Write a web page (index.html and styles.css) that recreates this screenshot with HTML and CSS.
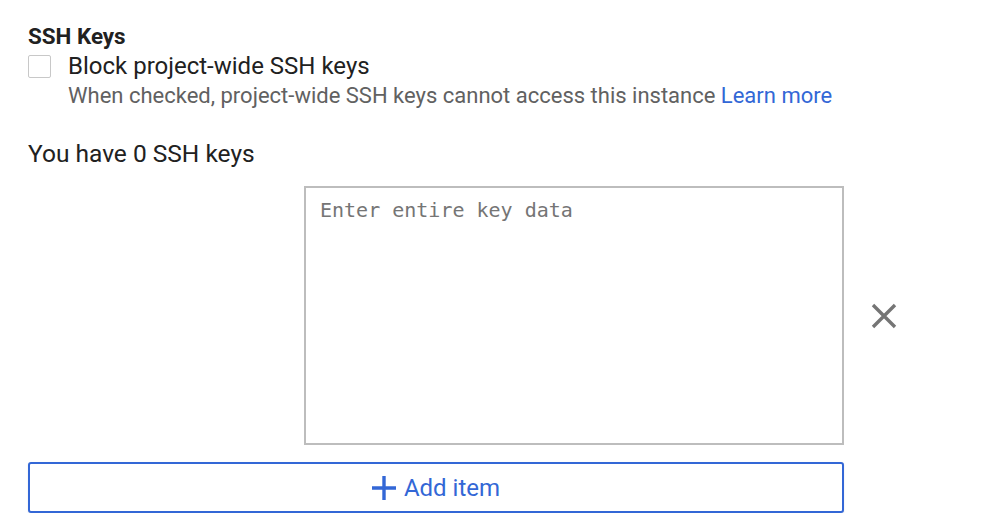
FILE: index.html
```html
<!DOCTYPE html>
<html>
<head>
<meta charset="utf-8">
<link rel="stylesheet" href="styles.css">
</head>
<body>
<div class="page">
  <div class="title">SSH Keys</div>
  <label class="check-row">
    <span class="checkbox"></span>
    <span class="check-text">
      <span class="check-label">Block project-wide SSH keys</span>
      <span class="hint">When checked, project-wide SSH keys cannot access this instance <a class="link" href="#">Learn more</a></span>
    </span>
  </label>
  <div class="count">You have 0 SSH keys</div>
  <div class="key-row">
    <textarea class="key-input" placeholder="Enter entire key data"></textarea>
    <button class="remove" aria-label="Remove">
      <svg width="28" height="28" viewBox="0 0 28 28"><path d="M3 3 L25 25 M25 3 L3 25" stroke="#757575" stroke-width="3.4" fill="none"/></svg>
    </button>
  </div>
  <button class="add">
    <svg class="plus" width="24" height="24" viewBox="0 0 24 24"><path d="M12 0 V24 M0 12 H24" stroke="#3367d6" stroke-width="3.4" fill="none"/></svg>
    <span>Add item</span>
  </button>
</div>
</body>
</html>
```
FILE: styles.css
```css
html, body { margin: 0; padding: 0; background: #fff; }
body { font-family: Roboto, "Noto Sans", sans-serif; color: #212121; }
.page { padding: 23px 0 0 28px; width: 816px; }
.title { font-size: 22.4px; font-weight: 700; line-height: 26px; }
.check-row { display: flex; gap: 17px; margin-top: 2px; }
.checkbox { width: 21px; height: 21px; border: 1px solid #c8c8c8; border-radius: 2px; margin-top: 4px; flex: none; }
.check-text { display: flex; flex-direction: column; }
.check-label { font-size: 24px; line-height: 30px; }
.hint { font-size: 22px; line-height: 30px; color: #616161; }
.link { color: #3367d6; text-decoration: none; }
.count { font-size: 24.5px; line-height: 30px; margin-top: 28px; }
.key-row { display: flex; align-items: center; margin-top: 17px; }
.key-input { flex: none; margin-left: 276px; width: 540px; height: 259px; box-sizing: border-box; border: 2px solid #bdbdbd; padding: 10px 14px; font-family: "DejaVu Sans Mono", monospace; font-size: 20px; resize: none; outline: none; }
.key-input::placeholder { color: #757575; }
.remove { flex: none; background: none; border: none; padding: 0; margin-left: 26px; width: 28px; height: 28px; display: flex; }
.add { margin-top: 17px; width: 816px; height: 51px; border: 2px solid #3367d6; border-radius: 3px; background: #fff; color: #3367d6; font-family: Roboto, sans-serif; font-size: 24px; display: flex; align-items: center; justify-content: center; gap: 8px; box-shadow: 0 1px 2px rgba(0,0,0,0.1); }
```
